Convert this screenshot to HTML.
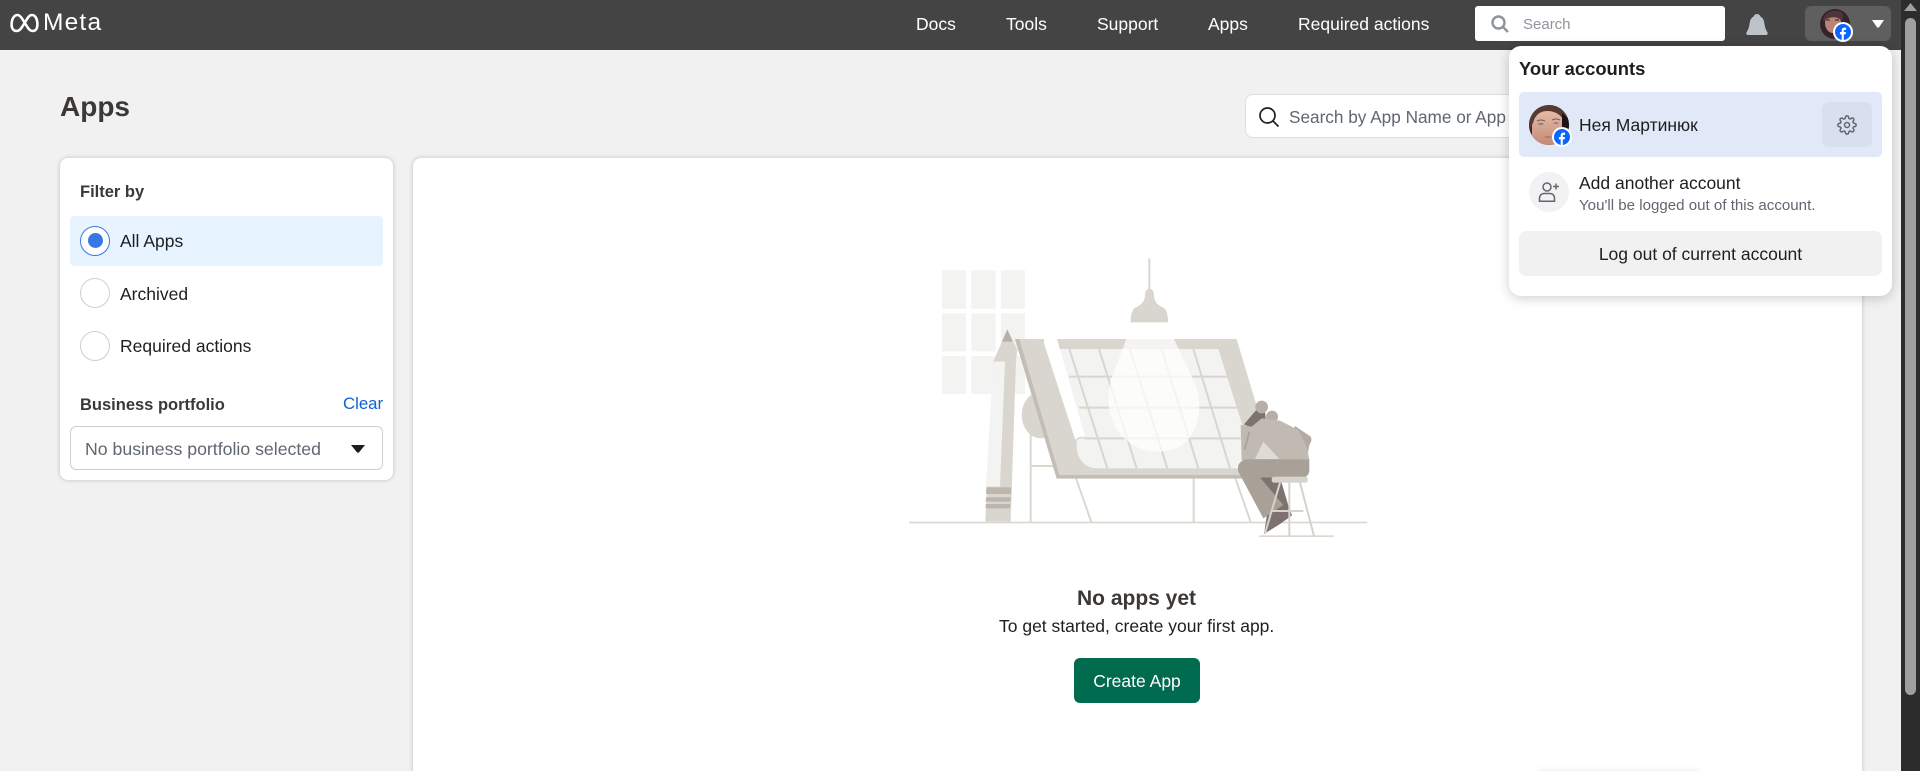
<!DOCTYPE html>
<html lang="en">
<head>
<meta charset="utf-8">
<title>Apps</title>
<style>
*{box-sizing:border-box}
html,body{margin:0;padding:0;width:1920px;height:771px;overflow:hidden;background:#f1f1f1;font-family:"Liberation Sans",Arial,sans-serif;color:#1c1e21}
#w{position:relative;width:1920px;height:771px;overflow:hidden;background:#f1f1f1}
.a{position:absolute}
.t{position:absolute;white-space:nowrap;line-height:24px;font-size:17.5px}
.b{font-weight:700}
.nav{left:0;top:0;width:1901px;height:50px;background:#444}
.nl{color:#fff;top:12px;font-size:17.5px}
.card{background:#fff;border-radius:8px;box-shadow:0 0 4px rgba(0,0,0,.22)}
.radio{left:80px;width:30px;height:30px;border-radius:50%;border:1px solid #ccd0d5;background:#fff}
</style>
</head>
<body>
<div id="w">
<svg width="0" height="0" style="position:absolute">
<defs>
<symbol id="fb" viewBox="0 0 20 20">
<circle cx="10" cy="10" r="10" fill="#fff"/>
<circle cx="10" cy="10" r="8" fill="#0866ff"/>
<path d="M8.700 18v-5.600H6.900V10h1.800V8.700c0-2.100 1-3.100 3-3.100.5 0 1 .1 1.400.2v2.100h-1c-1 0-1.300.4-1.300 1.200V10h2.200l-.4 2.400h-1.800V18z" fill="#fff"/>
</symbol>
</defs>
</svg>

<!-- page -->
<div class="t b" style="left:60px;top:90px;font-size:28px;line-height:34px;color:#3b3835">Apps</div>

<div class="a" style="left:1245px;top:94px;width:300px;height:44px;background:#fff;border:1px solid #dadde1;border-radius:8px"></div>
<svg class="a" style="left:1258px;top:106px" width="22" height="22" viewBox="0 0 22 22" fill="none" stroke="#1c1e21" stroke-width="1.700"><circle cx="9.500" cy="9.500" r="7.500"/><path d="M15 15l5.500 5.500"/></svg>
<div class="t" style="left:1289px;top:105px;font-size:17.200px;color:#606770">Search by App Name or App ID</div>

<div class="a card" style="left:60px;top:158px;width:333px;height:322px"></div>
<div class="t b" style="left:80px;top:180px;font-size:16.500px;color:#3b3835">Filter by</div>
<div class="a" style="left:70px;top:216px;width:313px;height:50px;background:#e7f3ff;border-radius:4px"></div>
<div class="a radio" style="top:226px;border-color:#3578e5"></div>
<div class="a" style="left:88px;top:233px;width:15px;height:15px;border-radius:50%;background:#3578e5"></div>
<div class="t" style="left:120px;top:229px">All Apps</div>
<div class="a radio" style="top:278px"></div>
<div class="t" style="left:120px;top:282px">Archived</div>
<div class="a radio" style="top:331px"></div>
<div class="t" style="left:120px;top:334px">Required actions</div>
<div class="t b" style="left:80px;top:393px;font-size:16.500px;color:#3b3835">Business portfolio</div>
<div class="t" style="left:343px;top:392px;font-size:16.800px;color:#0e63d3">Clear</div>
<div class="a" style="left:70px;top:426px;width:313px;height:44px;border:1px solid #ccd0d5;border-radius:6px;background:#fff"></div>
<div class="t" style="left:85px;top:437px;font-size:17.700px;color:#606770">No business portfolio selected</div>
<svg class="a" style="left:351px;top:445px" width="14" height="8" viewBox="0 0 14 8"><path d="M0 0h14L8 7.400Q7 8.200 6 7.400z" fill="#1c1e21"/></svg>

<div class="a card" style="left:413px;top:158px;width:1449px;height:640px"></div>

<!-- illustration -->
<svg class="a" style="left:880px;top:240px" width="500" height="310" viewBox="0 0 1500 930">
<g fill="#f3f3f1">
<rect x="186" y="91" width="72" height="115"/><rect x="274" y="91" width="73" height="115"/><rect x="363" y="91" width="72" height="115"/>
<rect x="186" y="220" width="72" height="114"/><rect x="274" y="220" width="73" height="114"/><rect x="363" y="220" width="72" height="114"/>
<rect x="186" y="348" width="72" height="114"/><rect x="274" y="348" width="73" height="114"/><rect x="363" y="348" width="72" height="114"/>
</g>
<rect x="87" y="845" width="1375" height="5" fill="#dbd8d1"/>
<rect x="1138" y="886" width="224" height="5" fill="#dbd8d1"/>
<g stroke="#dbd8d1" stroke-width="6" fill="none">
<path d="M452 560V846M452 678H520M588 715L634 846M941 715V846M1066 715L1112 846"/>
</g>
<ellipse cx="482" cy="525" rx="57" ry="70" fill="#d9d6cf"/>
<!-- pencil -->
<path d="M382 268L412 330L408 364L392 845H316L340 364Z" fill="#d9d6cf"/>
<path d="M340 365H375L360 740H318Z" fill="#f3f3f1"/>
<path d="M382 268L366 305H398Z" fill="#b8b0a6"/>
<path d="M319 742H394L393 762H318ZM318 772H393L392 785H317ZM317 792H391L390 805H317Z" fill="#bdb6ac"/>
<!-- board -->
<path d="M405 297H1070L1195 715H530Z" fill="#d9d6cf"/>
<path d="M405 297L418 297L538 705H1100V716H530Z" fill="#c4bdb3"/>
<path d="M532 327H1015L1128 685H650C615 685 590 655 590 620V600L610 593Z" fill="#f3f3f1"/>
<path d="M492 297H531L615 590H610C600 590 592 593 586 600L492 310Z" fill="#fff"/>
<g stroke="#d9d6cf" stroke-width="6" fill="none">
<path d="M568 410H1045M597 503H1075M610 595H1105"/>
<path d="M568 327L682 685M657 327L770 685M750 327L862 685M845 327L955 685M940 327L1050 685"/>
</g>
<!-- light -->
<path d="M757 247H858L945 430C975 510 955 635 835 635C745 635 682 560 685 470C687 430 700 400 712 370Z" fill="#fff" opacity=".72"/>
<!-- lamp -->
<path d="M805 55H811V147Q822 150 822 165C822 190 840 198 850 203C860 208 864 225 864 247H752C752 225 756 208 766 203C776 198 795 190 795 165Q795 150 805 147Z" fill="#d9d6cf"/>
<!-- person -->
<g transform="translate(1020 450)">
<path d="M225 108L272 140Q278 150 268 165L262 200L200 180Z" fill="#b3aaa2"/>
<path d="M72 103L100 70L118 50L135 65L138 95L100 115Z" fill="#7d7270"/>
<circle cx="125" cy="51" r="19" fill="#b8aea6"/>
<circle cx="156" cy="80" r="18" fill="#b8aea6"/>
<path d="M62 105L95 110L125 85L180 92L235 120L262 175L268 212H65Z" fill="#c1bab2"/>
<path d="M130 155L178 207H105Z" fill="#dfdcd6"/>
<path d="M88 125L74 178" stroke="#a89f96" stroke-width="5" fill="none"/>
<path d="M120 262H180L206 350L216 376L180 402L132 432L140 380Z" fill="#7d7270"/>
<path d="M80 208H268V238Q268 262 245 262H120L190 345L130 385L55 245Q48 215 80 208Z" fill="#a9a097"/>
<rect x="155" y="260" width="108" height="18" rx="7" fill="#d6d2cc"/>
<path d="M240 278L282 438M208 278V438M180 278L135 430M152 363H250" stroke="#d6d2cc" stroke-width="6" fill="none"/>
</g>
</svg>

<div class="t b" style="left:1077px;top:587px;font-size:21px;color:#3b3835">No apps yet</div>
<div class="t" style="left:999px;top:614px;color:#1c1e21">To get started, create your first app.</div>
<div class="a" style="left:1074px;top:658px;width:126px;height:45px;background:#006b4f;border-radius:6px"></div>
<div class="t" style="left:1074px;width:126px;text-align:center;top:669px;color:#fff">Create App</div>

<div class="a" style="left:1537px;top:775px;width:163px;height:10px;border-radius:8px;background:#fff;box-shadow:0 0 10px rgba(0,0,0,.25)"></div>

<!-- nav -->
<div class="a nav"></div>
<svg class="a" style="left:10px;top:13px" width="29" height="20" viewBox="0 0 29 20" fill="none" stroke="#fff" stroke-width="2.600"><path d="M7.500 2C3.800 2 1.600 6.500 1.600 11.500 1.600 15.500 3.500 18 6.500 18 9 18 10.600 16.500 13 12.500L15.800 8C18 4.300 19.500 2 22 2 25.300 2 27.400 6 27.400 11.500 27.400 15.500 25.600 18 22.800 18 20 18 18.300 15.800 15.800 11.500L13 7C11 3.600 9.500 2 7.500 2Z"/></svg>
<div class="t" style="left:43px;top:11px;font-size:24.500px;letter-spacing:1.200px;color:#fff">Meta</div>
<div class="t nl" style="left:916px">Docs</div>
<div class="t nl" style="left:1006px">Tools</div>
<div class="t nl" style="left:1097px">Support</div>
<div class="t nl" style="left:1208px">Apps</div>
<div class="t nl" style="left:1298px">Required actions</div>
<div class="a" style="left:1475px;top:6px;width:250px;height:35px;background:#fff;border-radius:3px"></div>
<svg class="a" style="left:1491px;top:15px" width="18" height="18" viewBox="0 0 18 18" fill="none" stroke="#90949c" stroke-width="2.400"><circle cx="7.500" cy="7.500" r="6"/><path d="M12 12l5 5"/></svg>
<div class="t" style="left:1523px;top:13px;font-size:15px;color:#90949c">Search</div>
<svg class="a" style="left:1746px;top:14px" width="22" height="22" viewBox="0 0 22 22"><path d="M11 0C13 0 14 1.500 14.500 2.600 17.500 4 18 7 18.500 10 19 14 20 16 21.600 18.500Q22 21 20 21H2Q0 21 .4 18.500C2 16 3 14 3.500 10 4 7 4.500 4 7.500 2.600 8 1.500 9 0 11 0Z" fill="#bec3c9"/></svg>
<div class="a" style="left:1805px;top:6px;width:86px;height:35px;background:#5f5f5f;border-radius:6px"></div>
<svg class="a" style="left:1820px;top:9px" width="30" height="30" viewBox="0 0 30 30"><defs><clipPath id="c2"><circle cx="15" cy="15" r="15"/></clipPath></defs><g clip-path="url(#c2)"><rect width="30" height="30" fill="#33242a"/><ellipse cx="13" cy="14" rx="8" ry="10" fill="#b98475"/><path d="M3 12C4 3 12 1 18 2 24 3 24 8 22 12 18 7 10 7 3 12Z" fill="#4d353a"/><path d="M6 11h4M15 11h4" stroke="#41302f" stroke-width="1.200"/></g></svg>
<svg class="a" style="left:1833px;top:22px" width="20" height="20"><use href="#fb"/></svg>
<svg class="a" style="left:1872px;top:20px" width="12" height="8" viewBox="0 0 12 8"><path d="M0 0h12L7 7.300Q6 8 5 7.300z" fill="#fff"/></svg>

<!-- scrollbar -->
<div class="a" style="left:1901px;top:0;width:19px;height:771px;background:#2c2c2c"></div>
<div class="a" style="left:1905px;top:18px;width:11px;height:677px;border-radius:6px;background:#9f9f9f"></div>
<svg class="a" style="left:1904px;top:3px" width="13" height="8" viewBox="0 0 13 8"><path d="M6.500 0L13 8H0z" fill="#9f9f9f"/></svg>

<!-- popup -->
<div class="a" style="left:1509px;top:46px;width:383px;height:250px;background:#fff;border-radius:12px;box-shadow:0 2px 12px rgba(0,0,0,.2)"></div>
<div class="t b" style="left:1519px;top:57px;font-size:18.400px;color:#1c1e21">Your accounts</div>
<div class="a" style="left:1519px;top:92px;width:363px;height:65px;background:#e1e9f9;border-radius:5px"></div>
<svg class="a" style="left:1529px;top:105px" width="40" height="40" viewBox="0 0 40 40"><defs><clipPath id="c1"><circle cx="20" cy="20" r="20"/></clipPath><linearGradient id="sk" x1="0" y1="0" x2="0" y2="1"><stop offset="0" stop-color="#e6bca8"/><stop offset="1" stop-color="#c48a76"/></linearGradient></defs><g clip-path="url(#c1)"><rect width="40" height="40" fill="#3a2629"/><path d="M3 40V16C5 8 12 5 21 5 29 5 33 9 34 16V40Z" fill="url(#sk)"/><path d="M0 26V16C2 5 12 0 21 0 31 0 38 6 40 16L34 14C30 8 24 6 18 6 11 6 6 10 4 18Z" fill="#563a34"/><path d="M33 8L40 14V40H33Z" fill="#1e1418"/><path d="M8 16Q12 14 16 16M23 15Q27 13 31 15" stroke="#7a5a4e" stroke-width="1" fill="none"/><path d="M8.500 19Q12 17 15 19Q12 20.800 8.500 19ZM24 18Q27 16.500 30 18Q27 19.800 24 18Z" fill="#6a7c9a"/><path d="M15 31Q19 32 23 31Q19 35 15 31Z" fill="#b8685f"/></g></svg>
<svg class="a" style="left:1552px;top:127px" width="20" height="20"><use href="#fb"/></svg>
<div class="t" style="left:1579px;top:113px">Нея Мартинюк</div>
<div class="a" style="left:1822px;top:102px;width:50px;height:45px;background:#d8e0f0;border-radius:7px"></div>
<svg class="a" style="left:1837px;top:115px" width="20" height="20" viewBox="0 0 24 24" fill="none" stroke="#606770" stroke-width="1.800"><circle cx="12" cy="12" r="3"/><path d="M19.400 15a1.650 1.650 0 0 0 .33 1.820l.06.06a2 2 0 0 1 0 2.830 2 2 0 0 1-2.830 0l-.06-.06a1.650 1.650 0 0 0-1.820-.33 1.650 1.650 0 0 0-1 1.510V21a2 2 0 0 1-2 2 2 2 0 0 1-2-2v-.09A1.650 1.650 0 0 0 9 19.400a1.650 1.650 0 0 0-1.820.33l-.06.06a2 2 0 0 1-2.830 0 2 2 0 0 1 0-2.830l.06-.06a1.650 1.650 0 0 0 .33-1.820 1.650 1.650 0 0 0-1.510-1H3a2 2 0 0 1-2-2 2 2 0 0 1 2-2h.09A1.650 1.650 0 0 0 4.600 9a1.650 1.650 0 0 0-.33-1.820l-.06-.06a2 2 0 0 1 0-2.830 2 2 0 0 1 2.830 0l.06.06a1.650 1.650 0 0 0 1.820.33H9a1.650 1.650 0 0 0 1-1.510V3a2 2 0 0 1 2-2 2 2 0 0 1 2 2v.09a1.650 1.650 0 0 0 1 1.510 1.650 1.650 0 0 0 1.820-.33l.06-.06a2 2 0 0 1 2.830 0 2 2 0 0 1 0 2.830l-.06.06a1.650 1.650 0 0 0-.33 1.820V9a1.650 1.650 0 0 0 1.510 1H21a2 2 0 0 1 2 2 2 2 0 0 1-2 2h-.09a1.650 1.650 0 0 0-1.510 1z"/></svg>
<div class="a" style="left:1529px;top:172px;width:40px;height:40px;border-radius:50%;background:#f2f2f2"></div>
<svg class="a" style="left:1538px;top:181px" width="22" height="22" viewBox="0 0 22 22" fill="none" stroke="#606770" stroke-width="1.500"><circle cx="9" cy="6" r="4"/><path d="M1.500 20.300V17c0-2.500 2-4.500 4.500-4.500h6c2.500 0 4.500 2 4.500 4.500v3.300zM15 5.500h6M18 2.500v6"/></svg>
<div class="t" style="left:1579px;top:171px">Add another account</div>
<div class="t" style="left:1579px;top:194px;font-size:15.100px;color:#606770">You'll be logged out of this account.</div>
<div class="a" style="left:1519px;top:231px;width:363px;height:45px;background:#f1f1f1;border-radius:7px"></div>
<div class="t" style="left:1519px;width:363px;text-align:center;top:242px;color:#1c1e21">Log out of current account</div>
</div>
</body>
</html>
